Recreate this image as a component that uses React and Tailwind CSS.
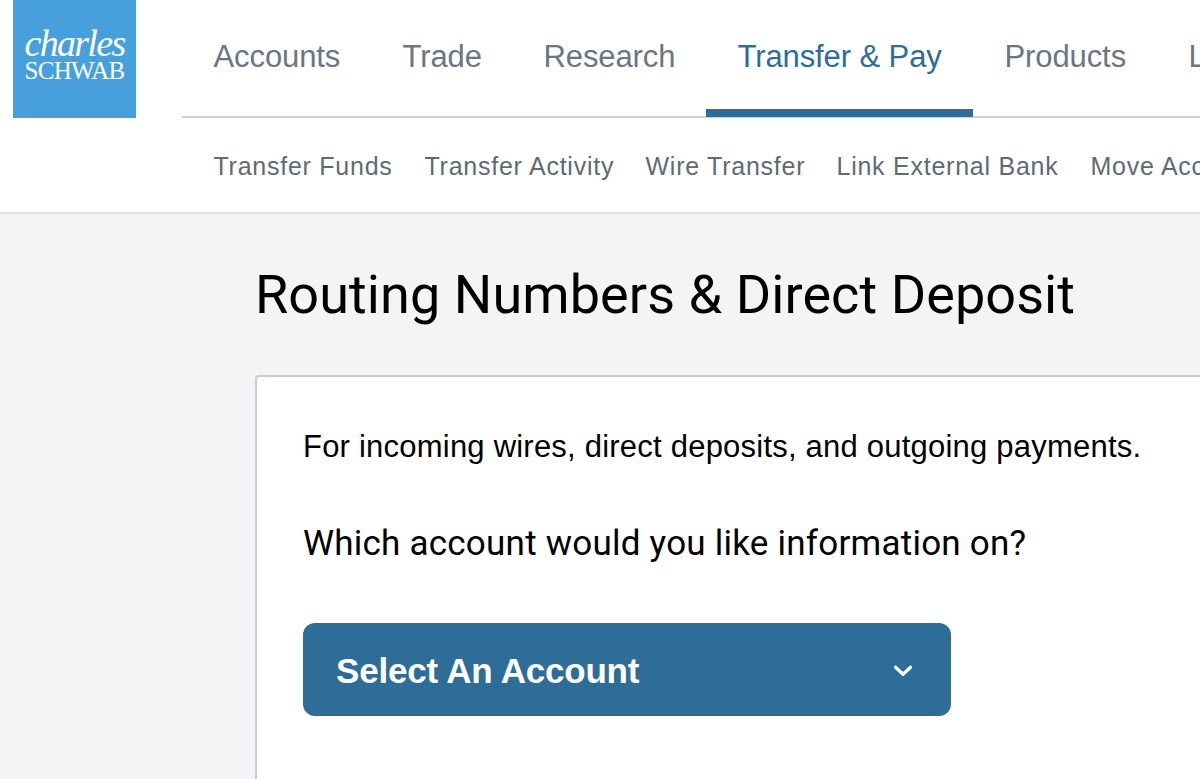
const navItems = [
  { label: 'Accounts', width: 'w-[126px]' },
  { label: 'Trade', width: 'w-[78px]' },
  { label: 'Research', width: 'w-[131px]' },
  { label: 'Transfer & Pay', width: 'w-[204px]', active: true },
  { label: 'Products', width: 'w-[121px]' },
  { label: 'Learn', width: 'w-[84px]' },
];

const subNavItems = [
  { label: 'Transfer Funds', width: 'w-[179px]' },
  { label: 'Transfer Activity', width: 'w-[189px]' },
  { label: 'Wire Transfer', width: 'w-[159px]' },
  { label: 'Link External Bank', width: 'w-[222px]' },
  { label: 'Move Account', width: 'w-[180px]' },
];

const Logo = () => (
  <div className="ml-[13px] flex h-[118px] w-[123px] shrink-0 flex-col items-center bg-[#479fdc] pt-[26px] text-white font-['Liberation_Serif',serif]">
    <div className="text-[38px] leading-[34px] italic tracking-[-1.7px]">charles</div>
    <div className="text-[25px] leading-[22px] tracking-[-0.7px]">SCHWAB</div>
  </div>
);

const Header = () => (
  <header className="h-[214px] overflow-hidden border-b-2 border-[#dcdfe2] bg-white">
    <div className="flex h-[118px]">
      <Logo />
      <nav className="ml-[46px] flex h-[118px] flex-1 border-b-2 border-[#cbd0d4]">
        {navItems.map((item) => (
          <a
            key={item.label}
            href="#"
            className={`flex h-[117px] shrink-0 items-start whitespace-nowrap border-b-8 px-[31.5px] pt-[39px] text-[31px] leading-[36px] tracking-[-0.1px] ${
              item.active ? 'border-[#2e6d97] text-[#2e6d97]' : 'border-transparent text-[#6a7682]'
            }`}
          >
            <span className={item.width}>{item.label}</span>
          </a>
        ))}
      </nav>
    </div>
    <nav className="ml-[213.5px] flex gap-8 pt-[33px] text-[25px] leading-[30px] tracking-[0.75px] text-[#5f6a74]">
      {subNavItems.map((item) => (
        <a key={item.label} href="#" className={`shrink-0 whitespace-nowrap ${item.width}`}>
          {item.label}
        </a>
      ))}
    </nav>
  </header>
);

const App = () => (
  <div className="h-[779px] w-full overflow-hidden bg-[#f3f4f6] font-['Liberation_Sans',Arial,sans-serif]">
    <Header />
    <main className="ml-[255px]">
      <h1 className="mt-[48px] h-[113px] whitespace-nowrap text-[54px] leading-[66px] tracking-[0.08px] text-black font-['Roboto',sans-serif]">
        Routing Numbers &amp; Direct Deposit
      </h1>
      <section className="h-[420px] w-[1000px] rounded-tl-[4px] border-2 border-[#c9cdd3] bg-white pl-[46px] pt-[52px] text-black">
        <p className="whitespace-nowrap text-[31px] leading-[36px] tracking-[0.22px]">
          For incoming wires, direct deposits, and outgoing payments.
        </p>
        <h2 className="mt-[57px] whitespace-nowrap text-[35px] leading-[44px] tracking-[0.23px] font-['Roboto',sans-serif]">
          Which account would you like information on?
        </h2>
        <button
          type="button"
          className="mt-[57px] flex h-[93px] w-[648px] items-center justify-between rounded-xl bg-[#2e6d97] pl-[33px] pr-[38px] pt-[3px] text-[35px] font-bold tracking-[-0.2px] text-white"
        >
          <span>Select An Account</span>
          <svg width="20" height="12" viewBox="0 0 20 12" fill="none" stroke="currentColor" strokeWidth="3.3" strokeLinecap="round" strokeLinejoin="round">
            <path d="M2.5 2.3l7.5 7 7.5-7" />
          </svg>
        </button>
      </section>
    </main>
  </div>
);

export default App;
